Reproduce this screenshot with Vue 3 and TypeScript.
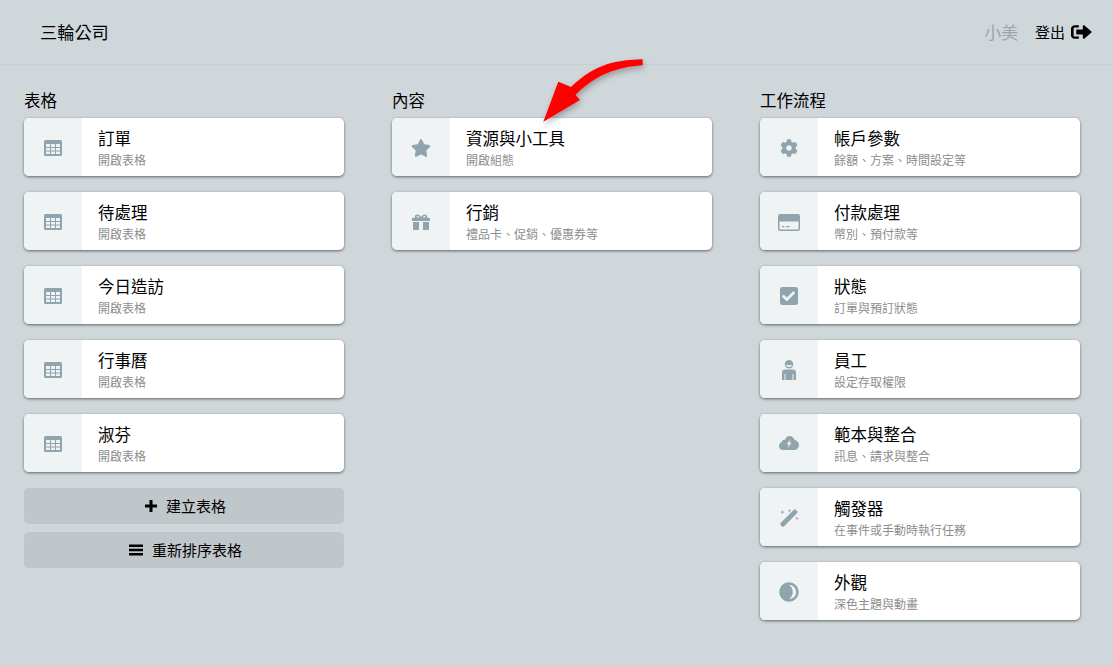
<script setup lang="ts">
type IconName = 'table' | 'star' | 'gift' | 'cog' | 'card' | 'check' | 'user' | 'cloud' | 'wand' | 'adjust'
interface Item { title: string; sub: string; icon: IconName }

const tables: Item[] = [
  { title: '訂單', sub: '開啟表格', icon: 'table' },
  { title: '待處理', sub: '開啟表格', icon: 'table' },
  { title: '今日造訪', sub: '開啟表格', icon: 'table' },
  { title: '行事曆', sub: '開啟表格', icon: 'table' },
  { title: '淑芬', sub: '開啟表格', icon: 'table' },
]
const content: Item[] = [
  { title: '資源與小工具', sub: '開啟組態', icon: 'star' },
  { title: '行銷', sub: '禮品卡、促銷、優惠券等', icon: 'gift' },
]
const flows: Item[] = [
  { title: '帳戶參數', sub: '餘額、方案、時間設定等', icon: 'cog' },
  { title: '付款處理', sub: '幣別、預付款等', icon: 'card' },
  { title: '狀態', sub: '訂單與預訂狀態', icon: 'check' },
  { title: '員工', sub: '設定存取權限', icon: 'user' },
  { title: '範本與整合', sub: '訊息、請求與整合', icon: 'cloud' },
  { title: '觸發器', sub: '在事件或手動時執行任務', icon: 'wand' },
  { title: '外觀', sub: '深色主題與動畫', icon: 'adjust' },
]
const columns = [
  { heading: '表格', items: tables, actions: true },
  { heading: '內容', items: content, actions: false },
  { heading: '工作流程', items: flows, actions: false },
]
</script>

<template>
  <div class="page">
    <header class="topbar">
      <span class="brand">三輪公司</span>
      <div class="user">
        <span class="name">小美</span>
        <a class="logout"><span class="raised">登出</span>
          <svg class="logout-icon" viewBox="0 0 512 512" preserveAspectRatio="none"><path d="M497 273L329 441c-15 15-41 4.500-41-17v-96H152c-13.300 0-24-10.700-24-24v-96c0-13.300 10.700-24 24-24h136V88c0-21.400 25.900-32 41-17l168 168c9.300 9.400 9.300 24.600 0 34zM192 436v-40c0-6.600-5.400-12-12-12H96c-17.700 0-32-14.300-32-32V160c0-17.700 14.300-32 32-32h84c6.600 0 12-5.400 12-12V76c0-6.600-5.400-12-12-12H96c-53 0-96 43-96 96v192c0 53 43 96 96 96h84c6.600 0 12-5.400 12-12z"/></svg>
        </a>
      </div>
    </header>

    <main class="columns">
      <section v-for="col in columns" :key="col.heading" class="column">
        <h2 class="heading">{{ col.heading }}</h2>
        <div class="cards">
          <div v-for="item in col.items" :key="item.title" class="card">
            <div class="card-icon">
              <svg v-if="item.icon === 'table'" width="18" height="16" viewBox="0 0 18 16">
                <path fill-rule="evenodd" d="M1.500 0h15A1.500 1.500 0 0 1 18 1.500v13a1.500 1.500 0 0 1-1.500 1.500h-15A1.500 1.500 0 0 1 0 14.500v-13A1.500 1.500 0 0 1 1.500 0zM2 4v3h4V4zm5 0v3h4V4zm5 0v3h4V4zM2 8v2.500h4V8zm5 0v2.500h4V8zm5 0v2.500h4V8zM2 11.500V14h4v-2.500zm5 0V14h4v-2.500zm5 0V14h4v-2.500z"/>
              </svg>
              <svg v-else-if="item.icon === 'star'" width="20" height="18" viewBox="0 0 576 512">
                <path d="M259.300 17.800L194 150.200 47.900 171.500c-26.200 3.800-36.700 36.100-17.700 54.600l105.700 103-25 145.500c-4.500 26.300 23.200 46 46.400 33.700L288 439.600l130.700 68.700c23.200 12.200 50.900-7.400 46.400-33.700l-25-145.500 105.700-103c19-18.500 8.500-50.800-17.700-54.600L382 150.200 316.700 17.800c-11.700-23.600-45.600-24-57.400 0z"/>
              </svg>
              <svg v-else-if="item.icon === 'gift'" width="18" height="16" viewBox="0 0 18 18" preserveAspectRatio="none">
                <path fill-rule="evenodd" d="M5.300 0.500C7 0.500 8.300 2 9 3.400 9.700 2 11 .5 12.700.5c1.500 0 2.500 1 2.500 2.300 0 .6-.2 1.100-.5 1.500H17c.6 0 1 .4 1 1V8H0V5.300c0-.6.400-1 1-1h2.300c-.3-.4-.5-.9-.5-1.500C2.800 1.500 3.800.5 5.300.5zm0 1.700c-.5 0-.8.300-.8.700 0 .5.300.9.900.9h2.200C7 3.200 6.200 2.200 5.300 2.200zm7.400 0c-.9 0-1.700 1-2.300 1.600h2.200c.6 0 .9-.4.900-.9 0-.4-.3-.7-.8-.7z"/>
                <path d="M1 9h6v9H2.200C1.500 18 1 17.500 1 16.800zM11 9h6v7.800c0 .7-.5 1.200-1.200 1.200H11z"/>
              </svg>
              <svg v-else-if="item.icon === 'cog'" width="18" height="18" viewBox="0 0 512 512">
                <path d="M487.400 315.700l-42.600-24.600c4.300-23.200 4.300-47 0-70.200l42.600-24.600c4.900-2.800 7.100-8.600 5.500-14-11.100-35.600-30-67.800-54.700-94.600-3.800-4.100-10-5.100-14.800-2.300L380.800 110c-17.900-15.400-38.500-27.300-60.800-35.100V25.800c0-5.600-3.900-10.500-9.400-11.700-36.700-8.200-74.300-7.800-109.200 0-5.500 1.200-9.400 6.100-9.400 11.700V75c-22.200 7.900-42.800 19.800-60.800 35.100L88.700 85.500c-4.900-2.800-11-1.900-14.800 2.300-24.700 26.700-43.600 58.900-54.700 94.600-1.700 5.400.6 11.200 5.500 14L67.300 221c-4.300 23.200-4.300 47 0 70.200l-42.600 24.600c-4.900 2.800-7.100 8.600-5.500 14 11.100 35.600 30 67.800 54.700 94.600 3.800 4.100 10 5.100 14.800 2.300l42.600-24.600c17.900 15.400 38.500 27.300 60.800 35.100v49.200c0 5.600 3.900 10.500 9.400 11.700 36.700 8.200 74.300 7.800 109.200 0 5.500-1.200 9.400-6.100 9.400-11.700v-49.200c22.200-7.900 42.800-19.800 60.800-35.100l42.600 24.600c4.900 2.800 11 1.900 14.800-2.300 24.700-26.700 43.600-58.900 54.700-94.600 1.500-5.500-.7-11.300-5.600-14.100zM256 336c-44.100 0-80-35.900-80-80s35.900-80 80-80 80 35.900 80 80-35.900 80-80 80z"/>
              </svg>
              <svg v-else-if="item.icon === 'card'" width="22" height="17" viewBox="0 0 22 18" preserveAspectRatio="none">
                <path fill-rule="evenodd" d="M2 0h18a2 2 0 0 1 2 2v14a2 2 0 0 1-2 2H2a2 2 0 0 1-2-2V2a2 2 0 0 1 2-2zM1.500 8v7.500c0 .6.400 1 1 1h17c.6 0 1-.4 1-1V8zM4 12.800h2.500V14H4zm4 0h3.500V14H8z"/>
              </svg>
              <svg v-else-if="item.icon === 'check'" width="18" height="18" viewBox="0 0 18 18">
                <path fill-rule="evenodd" d="M2.200 0h13.600C17 0 18 1 18 2.200v13.600c0 1.200-1 2.200-2.200 2.200H2.200C1 18 0 17 0 15.800V2.200C0 1 1 0 2.200 0zM7.300 14l7.500-7.500c.3-.3.300-.7 0-1l-1-1c-.3-.3-.7-.3-1 0L6.800 10.600 4.200 8c-.3-.3-.7-.3-1 0l-1 1c-.3.300-.3.700 0 1l4.100 4c.3.300.7.300 1 0z"/>
              </svg>
              <svg v-else-if="item.icon === 'user'" width="14" height="20" viewBox="0 0 14 20">
                <path fill-rule="evenodd" d="M7 0a4.300 4.300 0 0 1 4.300 4.300A4.300 4.300 0 0 1 7 8.600a4.300 4.300 0 0 1-4.300-4.300A4.300 4.300 0 0 1 7 0zM3.700 4.600c.5 1.700 1.700 2.500 3.300 2.500s2.800-.8 3.300-2.500c-2 .8-4.600.8-6.600 0z"/>
                <path d="M3 9.500h8c1.700 0 3 1.300 3 3V20h-2.500v-6h-1v6h-7v-6h-1v6H0v-7.500c0-1.700 1.300-3 3-3z"/>
              </svg>
              <svg v-else-if="item.icon === 'cloud'" width="20" height="16" viewBox="0 0 20 16">
                <path fill-rule="evenodd" d="M10.500 0c2.500 0 4.500 1.700 5 4.100 2.500.3 4.500 2.400 4.500 5 0 2.700-2.300 5-5 5H4.200C1.900 14.100 0 12.200 0 9.900c0-1.800 1.100-3.300 2.800-3.900C3 4.700 4.100 3.800 5.400 3.800c.2 0 .4 0 .6.100C6.700 1.600 8.400 0 10.500 0zM11.600 3 7.700 8.300h2.200l-1.300 3.900 4-5.600h-2.300z"/>
              </svg>
              <svg v-else-if="item.icon === 'wand'" width="20" height="20" viewBox="0 0 20 20">
                <path d="M14.900 1.800c.5-.5 1.300-.5 1.800 0l1.500 1.500c.5.500.5 1.300 0 1.800L4.900 18.400c-.5.500-1.300.5-1.800 0l-1.500-1.500c-.5-.5-.5-1.300 0-1.800z"/>
                <path d="M2.800 3.500l.6-1.300.6 1.300 1.300.6-1.300.6-.6 1.300-.6-1.300-1.300-.6zM10 2.300l.5-1.300.5 1.300 1.300.5-1.300.5-.5 1.300-.5-1.300-1.300-.5zM17.500 10l.5-1.200.5 1.200 1.300.5-1.300.5-.5 1.200-.5-1.200-1.300-.5z"/>
              </svg>
              <svg v-else width="20" height="20" viewBox="0 0 512 512">
                <path fill-rule="evenodd" d="M256 8C119 8 8 119 8 256s111 248 248 248 248-111 248-248S393 8 256 8zm0 64a184 184 0 0 1 0 368c60-45 96-110 96-184s-36-139-96-184z"/>
              </svg>
            </div>
            <div class="card-text">
              <div class="card-title">{{ item.title }}</div>
              <div class="card-sub">{{ item.sub }}</div>
            </div>
          </div>
        </div>
        <div v-if="col.actions" class="actions">
          <button class="action">
            <svg width="12" height="12" viewBox="0 0 12 12"><path d="M4.500 0h3v4.500H12v3H7.500V12h-3V7.500H0v-3h4.500z"/></svg>
            <span class="raised">建立表格</span>
          </button>
          <button class="action">
            <svg width="14" height="12" viewBox="0 0 14 12"><path d="M0 .5h14v2.400H0zM0 4.800h14v2.400H0zM0 9.100h14v2.400H0z"/></svg>
            <span class="raised">重新排序表格</span>
          </button>
        </div>
      </section>
    </main>

    <svg class="arrow" width="1113" height="140" viewBox="0 0 1113 140">
      <defs>
        <filter id="arrow-shadow" x="-20%" y="-20%" width="140%" height="150%">
          <feDropShadow dx="1" dy="3" stdDeviation="3" flood-color="#000" flood-opacity="0.3" />
        </filter>
      </defs>
      <path
        filter="url(#arrow-shadow)"
        fill="#ff0000"
        d="M642.700 59.300C618 60 596 63 571 87L558.300 81.700 543.300 121.700 580 100 575.500 95C596 74 618 67 642.700 65.200Z"
      />
    </svg>
  </div>
</template>

<style>
html, body { margin: 0; background: #d0d7db; }
</style>

<style scoped>
.page {
  position: relative;
  min-height: 666px;
  background: #d0d7db;
  font-family: Roboto, "Noto Sans CJK TC", sans-serif;
  color: #000;
  overflow: hidden;
}
.topbar {
  height: 64px;
  display: flex;
  align-items: center;
  justify-content: space-between;
  padding: 0 21px 0 40px;
  border-bottom: 1px solid #c9d0d4;
}
.brand { font-size: 17.2px; margin-top: -2px; }
.raised { margin-top: -2px; }
.user { display: flex; align-items: center; gap: 17px; }
.name { font-size: 16.8px; color: #9ea5a8; }
.logout { display: flex; align-items: center; gap: 6px; font-size: 15px; }
.logout-icon { width: 21px; height: 18px; display: block; }
.columns {
  display: flex;
  gap: 48px;
  padding: 24px 24px 0;
}
.column { width: 320px; }
.heading {
  margin: 0;
  height: 29px;
  line-height: 26px;
  font-size: 16.5px;
  font-weight: 400;
}
.cards { display: flex; flex-direction: column; gap: 16px; }
.card {
  height: 58px;
  display: flex;
  background: #fff;
  border-radius: 5px;
  overflow: hidden;
  box-shadow: 0 1px 3px rgba(0, 0, 0, 0.55);
}
.card-icon {
  width: 58px;
  box-sizing: border-box;
  padding-top: 2px;
  flex: none;
  display: flex;
  align-items: center;
  justify-content: center;
  background: #eff3f4;
  fill: #90a4ae;
}
.card-text { padding: 10px 16px 0; }
.card-title { font-size: 16.5px; line-height: 24px; }
.card-sub { font-size: 12px; line-height: 18px; color: #8d8d8d; }
.actions {
  margin-top: 16px;
  display: flex;
  flex-direction: column;
  gap: 8px;
}
.action {
  height: 36px;
  display: flex;
  align-items: center;
  justify-content: center;
  gap: 9px;
  padding: 0 0 0 3px;
  border: 0;
  border-radius: 5px;
  background: #c0c7cb;
  color: #000;
  font: inherit;
  font-size: 15px;
}
.arrow {
  position: absolute;
  left: 0;
  top: 0;
  pointer-events: none;
}
</style>
